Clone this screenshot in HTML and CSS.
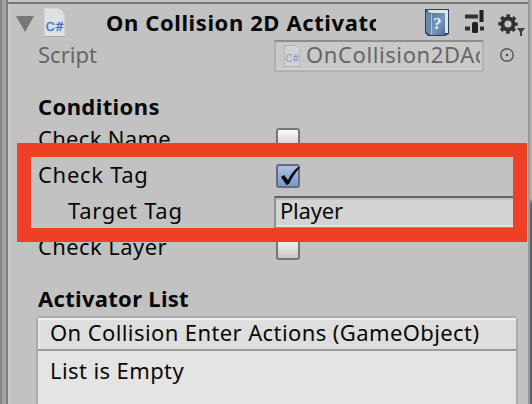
FILE: index.html
```html
<!DOCTYPE html>
<html lang="en">
<head>
<meta charset="utf-8">
<title>Inspector</title>
<link rel="stylesheet" href="styles.css">
</head>
<body>
<div class="window">
  <div class="gutter"></div>
  <main class="inspector">
    <header class="header">
      <svg class="foldout" width="18" height="16" viewBox="0 0 18 16"><path d="M0 0H18L9 16Z" fill="#777"/></svg>
      <svg class="script-icon" width="21" height="29" viewBox="0 0 21 29">
        <path d="M.5.5H15.500L20.500 6V28.500H.5Z" fill="#dfe2e4" stroke="#d0d2d4"/>
        <path d="M15.500.5V5H20.500Z" fill="#f5f5f5" stroke="#b4b4b4" stroke-width=".6"/>
        <path d="M0 28.500H21" stroke="#aaa"/>
        <text x="1.500" y="23" class="cs" textLength="18" lengthAdjust="spacingAndGlyphs">C#</text>
      </svg>
      <h1 class="title">On Collision 2D Activator</h1>
      <div class="tools">
        <svg width="27" height="29" viewBox="0 0 27 29">
          <defs><linearGradient id="book" x2="1" y2="1"><stop stop-color="#5877a4"/><stop offset=".55" stop-color="#7897bd"/><stop offset="1" stop-color="#4d6c9a"/></linearGradient></defs>
          <path d="M1 1H25V26L21 28H4L1 25Z" fill="#293f60"/>
          <path d="M3 2H24V25H21V5H6Z" fill="#dde4eb"/>
          <path d="M2 3L6 5V27L2 24Z" fill="#6d88ad"/>
          <path d="M6 5H21V27H6Z" fill="url(#book)"/>
          <path d="M7.500 6V26" stroke="#abc0dc"/>
          <text x="9" y="21" class="help">?</text>
        </svg>
        <svg width="21" height="24" viewBox="0 0 21 24">
          <path d="M1 6.500H14M1 18.500H6M16 18.500H20" stroke="#303030" stroke-width="4"/>
          <path d="M17.500 0V12" stroke="#202020" stroke-width="4"/>
          <rect x="8" y="12" width="6" height="11" rx="1.500" fill="#202020"/>
        </svg>
        <svg width="27" height="24" viewBox="0 0 27 24">
          <g fill="none" stroke="#303030"><circle cx="10" cy="10" r="5.600" stroke-width="4"/>
          <circle cx="10" cy="10" r="8" stroke-width="3.400" stroke-dasharray="3.400 2.883" stroke-dashoffset="1.700"/></g>
          <path d="M19 14H27L24 18V22H22V18Z" fill="#404040"/>
        </svg>
      </div>
    </header>
    <div class="row script">
      <span class="label t-script">Script</span>
      <div class="object-field">
        <svg width="16" height="22" viewBox="0 0 16 22">
          <path d="M.5.5H11.500L15.500 5V21.500H.5Z" fill="#d0d2d3" stroke="#b4b5b6"/>
          <path d="M11.500.5V5H15.500Z" fill="#d9d9d9"/>
          <text x="1.500" y="17" class="cs-small" textLength="13" lengthAdjust="spacingAndGlyphs">C#</text>
        </svg>
        <span class="object-name">OnCollision2DActivator</span>
      </div>
      <svg class="picker" width="16" height="16" viewBox="0 0 16 16"><circle cx="8" cy="8" r="6.200" fill="none" stroke="#555" stroke-width="1.400"/><circle cx="8" cy="8" r="1.200" fill="#444"/></svg>
    </div>
    <h2 class="heading t-conditions">Conditions</h2>
    <div class="fields">
      <div class="row"><span class="label t-name">Check Name</span><span class="box"></span></div>
      <div class="row"><span class="label t-tag">Check Tag</span><span class="box checked"><svg width="21" height="20" viewBox="0 0 21 20"><path d="M1 11L4 9L8 14Q12 6 18 1L20 1.500Q13 9 9 18L6.500 19Z" fill="#080808"/></svg></span></div>
      <div class="row"><span class="label nested t-target">Target Tag</span><span class="text-field">Player</span></div>
      <div class="row"><span class="label t-layer">Check Layer</span><span class="box"></span></div>
    </div>
    <h2 class="heading t-list">Activator List</h2>
    <section class="list">
      <div class="list-header"><span>On Collision Enter Actions (GameObject)</span></div>
      <div class="list-body"><span>List is Empty</span></div>
    </section>
  </main>
  <div class="edge"></div>
  <div class="highlight"></div>
</div>
</body>
</html>
```
FILE: styles.css
```css
* { box-sizing: border-box; }
body { margin: 0; overflow: hidden; }
svg { display: block; flex: none; }
.window {
  position: relative; display: flex; width: 532px; height: 404px; overflow: hidden;
  background: #c2c2c2; color: #080808;
  font: 22px/32px "Noto Sans", "Open Sans", sans-serif; white-space: nowrap;
}
.gutter { flex: none; width: 10px; background: linear-gradient(90deg, #858585 0 2px, #a2a2a2 2px 6px, #808080 6px 8px, #cbcbcb 8px); }
.inspector { flex: none; width: 518px; padding-top: 2px; }
.edge { width: 4px; border-left: 2px solid #999; background: linear-gradient(#b2b2b2 0 198px, #59647d 204px); }
.header { display: flex; align-items: flex-start; height: 37px; margin-left: -2px; border-top: 2px solid #777; }
.foldout { margin: 12px 0 0 8px; }
.script-icon { margin: 4px 0 0 10px; }
.cs { font: 13px "Roboto", sans-serif; fill: #4c72cb; stroke: #4c72cb; stroke-width: .3px; }
.cs-small { font: 10px "Roboto", sans-serif; fill: #8699ce; }
.help { font: bold 17px "Liberation Serif", serif; fill: #e7eef7; }
.title { width: 270px; margin: 2px 0 0 41px; overflow: hidden; font-size: 22px; font-weight: 700; letter-spacing: .6px; }
.tools { display: flex; gap: 13px; margin: 4px 0 0 48px; }
.tools svg:nth-child(2) { margin: 2px 0 0 0; }
.tools svg:nth-child(3) { margin: 6px 0 0 0; }
.row { display: flex; height: 32px; padding-left: 28px; }
.label { width: 236px; flex: none; margin-top: -1px; }
.t-name { letter-spacing: .3px; }
.t-tag, .t-target { letter-spacing: .7px; }
.t-layer { letter-spacing: .4px; }
.nested { padding-left: 30px; }
.script { color: #666; }
.object-field {
  display: flex; width: 210px; height: 32px; margin-top: 1px; padding: 3px 2px 0 8px;
  border: 2px solid #b1b1b1; border-top-color: #8e8e8e; background: #c9c9c9;
  box-shadow: inset 0 -2px #d1d1d1;
}
.object-name { width: 174px; margin: -7px 0 0 6px; overflow: hidden; letter-spacing: .6px; }
.picker { margin: 8px 0 0 15px; }
.heading { margin: 19px 0 1px 28px; font-size: 22px; font-weight: 700; line-height: 32px; letter-spacing: .4px; }
.t-list { letter-spacing: .3px; }
.fields { display: flex; flex-direction: column; gap: 4px; }
.box {
  width: 24px; height: 24px; margin: 5px 0 0 2px; border: 2px solid #757575; border-radius: 3px;
  background: linear-gradient(#fafafa, #c8c8ca);
}
.checked { background: linear-gradient(#a9c1e5, #7998c9); border-color: #666d78; }
.checked svg { margin: 0 0 0 2px; }
.text-field {
  width: 250px; height: 33px; margin-top: 1px; padding-left: 4px; line-height: 25px; letter-spacing: -.2px;
  border: 2px solid #909090; border-top-color: #606060; background: #d3d3d3;
  box-shadow: inset 0 2px #c2c2c2, inset 0 -2px #e2e2e2;
}
.list { width: 482px; height: 89px; margin: 2px 0 0 26px; border: 2px solid #aaa; border-bottom: 0; border-radius: 5px 5px 0 0; background: #e4e4e4; letter-spacing: .4px; }
.list-header { height: 33px; padding-left: 12px; border-bottom: 2px solid #999; background: #dedede; box-shadow: inset 0 2px #f0f0f0, inset 2px 0 #e6e6e6; line-height: 29px; }
.list-body { padding: 3px 0 0 12px; }
.highlight { position: absolute; left: 16.5px; top: 143px; width: 510.5px; height: 98.5px; border: 14px solid #ed4024; }
```
